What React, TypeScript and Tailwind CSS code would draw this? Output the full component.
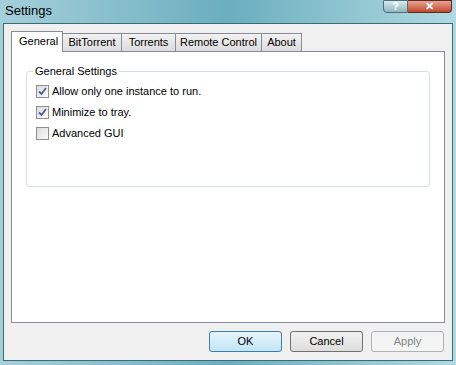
import React from 'react';

const tabs = [
  { label: 'General', w: 'w-[52px]' },
  { label: 'BitTorrent', w: 'w-[59px]' },
  { label: 'Torrents', w: 'w-[54px]' },
  { label: 'Remote Control', w: 'w-[86px]' },
  { label: 'About', w: 'w-[40px]' },
];

const options = [
  { label: 'Allow only one instance to run.', checked: true },
  { label: 'Minimize to tray.', checked: true },
  { label: 'Advanced GUI', checked: false },
];

function Check({ checked }: { checked: boolean }) {
  return (
    <div className="w-[13px] h-[13px] shrink-0 border border-[#8e8f8f] bg-gradient-to-br from-[#dcdcdc] to-[#fbfbfb] flex items-center justify-center">
      {checked && (
        <svg width="9" height="9" viewBox="0 0 9 9">
          <path d="M1 4.5 L3.5 7 L8 1" fill="none" stroke="#4a5f97" strokeWidth="1.8" />
        </svg>
      )}
    </div>
  );
}

export default function App() {
  return (
    <div
      className="w-[456px] h-[365px] bg-gradient-to-r from-[#a4d0da] via-[#6aaebf] to-[#b0dae1] flex flex-col text-[11px] text-black"
      style={{ fontFamily: '"Liberation Sans", Arial, sans-serif' }}
    >
      {/* Title bar */}
      <div className="h-[23px] flex items-start shrink-0">
        <div className="pl-[5px] pt-[1px] text-[13px] text-black">Settings</div>
        <div className="ml-auto mr-[4px] flex">
          <div className="w-[25px] h-[13px] rounded-bl-[4px] border border-[#4d6f7a] bg-gradient-to-b from-[#d8ebee] to-[#8fb6be] flex items-center justify-center text-[11px] font-bold text-white leading-none">
            ?
          </div>
          <div className="w-[44px] h-[13px] rounded-br-[4px] border border-l-0 border-[#5b2a20] bg-gradient-to-b from-[#e8a493] to-[#c2452c] flex items-center justify-center text-[11px] font-bold text-white leading-none">
            ✕
          </div>
        </div>
      </div>

      {/* Client area */}
      <div className="flex-1 mx-[3px] mb-[4px] border border-[#3c6b78] bg-[#f0f0f0] flex flex-col pt-[6px] px-[7px]">
        {/* Tabs */}
        <div className="flex items-end h-[21px]">
          {tabs.map((t, i) =>
            i === 0 ? (
              <div
                key={t.label}
                className={`${t.w} h-[21px] border border-b-0 border-[#898c95] bg-white pl-[7px] leading-[19px] relative z-10 -mb-px`}
              >
                {t.label}
              </div>
            ) : (
              <div
                key={t.label}
                className={`${t.w} h-[18px] border border-l-0 border-b-0 border-[#898c95] bg-gradient-to-b from-[#f2f2f2] to-[#dcdcdc] text-center leading-[17px]`}
              >
                {t.label}
              </div>
            )
          )}
        </div>
        {/* Tab pane */}
        <div className="h-[272px] border border-[#898c95] bg-white px-[14px] pt-[19px]">
          <div className="relative h-[116px] border border-[#d5dfe5] rounded-[3px] pt-[13px] px-[9px]">
            <div className="absolute -top-[8px] left-[6px] bg-white px-[2px] leading-[14px]">General Settings</div>
            <div className="flex flex-col gap-[8px]">
              {options.map((o) => (
                <div key={o.label} className="flex items-center gap-[3px] h-[13px]">
                  <Check checked={o.checked} />
                  <span className="leading-[13px]">{o.label}</span>
                </div>
              ))}
            </div>
          </div>
        </div>
        {/* Buttons */}
        <div className="flex justify-end gap-[8px] pt-[8px] pr-[1px]">
          <div className="w-[73px] h-[21px] rounded-[3px] border border-[#3c7fb1] bg-gradient-to-b from-[#e5f4fc] to-[#c4e5f6] flex items-center justify-center">
            OK
          </div>
          <div className="w-[73px] h-[21px] rounded-[3px] border border-[#707070] bg-gradient-to-b from-[#f2f2f2] to-[#dddddd] flex items-center justify-center">
            Cancel
          </div>
          <div className="w-[73px] h-[21px] rounded-[3px] border border-[#adb2b5] bg-[#f4f4f4] text-[#838383] flex items-center justify-center">
            Apply
          </div>
        </div>
      </div>
    </div>
  );
}
